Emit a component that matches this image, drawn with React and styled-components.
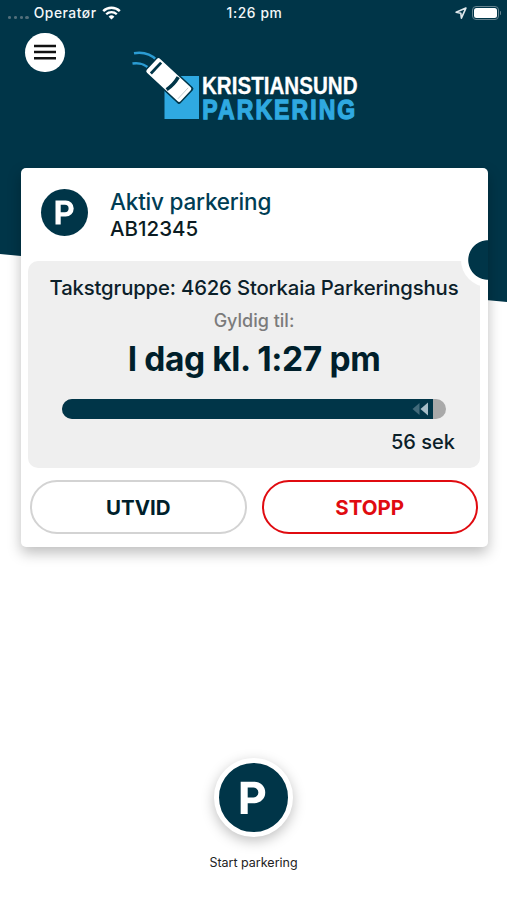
import React from "react";
import styled, { createGlobalStyle } from "styled-components";

const App = () => {
  return (
    <>
      <GlobalStyle />
      <Page>
        <StatusBar>
          <Carrier>
            <Dots>
              <Dot />
              <Dot />
              <Dot />
              <Dot />
            </Dots>
            <CarrierName>Operatør</CarrierName>
            <WifiIcon />
          </Carrier>
          <Clock>1:26 pm</Clock>
          <StatusIcons>
            <LocationIcon />
            <Battery>
              <BatteryLevel />
            </Battery>
            <BatteryTip />
          </StatusIcons>
        </StatusBar>
        <Header>
          <MenuButton aria-label="Meny">
            <MenuIcon />
          </MenuButton>
          <Logo />
        </Header>
        <Card>
          <CardTop>
            <Badge>
              <ParkingP width={20} />
            </Badge>
            <div>
              <Title>Aktiv parkering</Title>
              <Plate>AB12345</Plate>
            </div>
          </CardTop>
          <Panel>
            <Zone>Takstgruppe: 4626 Storkaia Parkeringshus</Zone>
            <Muted>Gyldig til:</Muted>
            <ValidTo>I dag kl. 1:27 pm</ValidTo>
            <Track>
              <Fill>
                <Arrows />
              </Fill>
            </Track>
            <Remaining>56 sek</Remaining>
          </Panel>
          <Actions>
            <Button>UTVID</Button>
            <Button $danger>STOPP</Button>
          </Actions>
          <Notch />
        </Card>
        <Start>
          <StartButton aria-label="Start parkering">
            <ParkingP width={27} />
          </StartButton>
          <StartLabel>Start parkering</StartLabel>
        </Start>
      </Page>
    </>
  );
};

const WifiIcon = () => (
  <svg width="19" height="14" viewBox="0 0 19 14" fill="none">
    <path d="M1.2 5.1a12 12 0 0 1 16.6 0" stroke="#fff" strokeWidth="2.5" />
    <path d="M4.2 8.3a7.6 7.6 0 0 1 10.6 0" stroke="#fff" strokeWidth="2.3" />
    <path d="M9.5 13.6 6.6 10.7a4.2 4.2 0 0 1 5.8 0Z" fill="#fff" />
  </svg>
);

const LocationIcon = () => (
  <svg width="12" height="12" viewBox="0 0 12 12" fill="none">
    <path
      d="M10.9 1.1 1.1 5.3l4.7.9.6 4.9Z"
      stroke="#dfe8ec"
      strokeWidth="1.6"
      strokeLinejoin="round"
    />
  </svg>
);

const MenuIcon = () => (
  <svg width="22" height="16" viewBox="0 0 22 16">
    <path d="M0 1.9h22M0 8.1h22M0 14.300h22" stroke="#111" strokeWidth="2.500" />
  </svg>
);

const ParkingP = ({ width }) => (
  <svg width={width} viewBox="0 0 20 25">
    <path
      d="M0.5 0.5h10.2a8 8 0 0 1 0 16H5.7v8H0.5ZM5.7 4.8v7.4h4.2a3.7 3.7 0 0 0 0-7.4Z"
      fill="#fff"
      fillRule="evenodd"
    />
  </svg>
);

const Arrows = () => (
  <svg width="18" height="14" viewBox="0 0 18 14">
    <path d="M7.5 1v12L0.5 7Z" fill="#426a7a" />
    <path d="M16 0.5v13L8.5 7Z" fill="#a5bdc8" />
  </svg>
);

const Logo = () => (
  <LogoSvg width="240" height="80" viewBox="0 0 240 80">
    <rect x="31.5" y="25" width="34.5" height="43" fill="#2fa9e1" />
    <path
      d="M1 2.3c9-1.500 16 0 23 7M-0.500 12.500c7-1 12 0 17.500 6"
      stroke="#2b9cd3"
      strokeWidth="2.500"
      fill="none"
    />
    <g transform="translate(35.800 29) rotate(43)">
      <rect x="-24.500" y="-11" width="49" height="22" rx="2" fill="#003548" />
      <rect x="-23" y="-9.500" width="46" height="19" rx="2" fill="#fff" />
      <path d="M-17.500-7.500v15" stroke="#003548" strokeWidth="2.800" fill="none" />
      <path d="M5-8.500q2 8.500 0 17" stroke="#003548" strokeWidth="3.600" fill="none" />
      <path d="M19.500-7.500v15" stroke="#b5c2c8" strokeWidth="0.800" fill="none" />
    </g>
    <LogoText
      x="69"
      y="43"
      fontSize="24.500"
      fill="#fff"
      stroke="#fff"
      strokeWidth="0.300"
      textLength="155.500"
    >
      KRISTIANSUND
    </LogoText>
    <LogoText
      x="69.300"
      y="67.500"
      fontSize="27.500"
      letterSpacing="2.500"
      fill="#2fa9e1"
      stroke="#2fa9e1"
      strokeWidth="1.300"
      textLength="155"
    >
      PARKERING
    </LogoText>
  </LogoSvg>
);

const GlobalStyle = createGlobalStyle`
  * {
    box-sizing: border-box;
  }
  body {
    margin: 0;
    background: #fff;
    font-family: Inter, "Liberation Sans", sans-serif;
  }
`;

const Page = styled.div`
  position: relative;
  display: flex;
  flex-direction: column;
  width: 507px;
  height: 900px;
  overflow: hidden;
  isolation: isolate;
  &::before {
    content: "";
    position: absolute;
    inset: 0 0 auto;
    height: 302px;
    z-index: -1;
    background: #003548;
    clip-path: polygon(0 0, 100% 0, 100% 100%, 0 254px);
  }
`;

const StatusBar = styled.div`
  display: grid;
  grid-template-columns: 1fr auto 1fr;
  align-items: center;
  height: 26px;
  padding: 0 6px 0 8px;
  color: #f4f8f9;
  font-size: 13.8px;
  font-weight: 500;
  line-height: 16px;
`;

const Carrier = styled.div`
  display: flex;
  align-items: center;
`;

const Dots = styled.div`
  display: flex;
  gap: 2.5px;
  margin: 8px 5px 0 0;
`;

const Dot = styled.span`
  width: 3.3px;
  height: 3px;
  border-radius: 50%;
  background: #526f7b;
`;

const CarrierName = styled.span`
  margin-right: 5px;
  letter-spacing: 0.55px;
`;

const Clock = styled.div`
  letter-spacing: 0.6px;
`;

const StatusIcons = styled.div`
  display: flex;
  align-items: center;
  justify-content: flex-end;
`;

const Battery = styled.div`
  width: 27px;
  height: 14px;
  margin-left: 5px;
  padding: 1px;
  border: 1px solid #66838f;
  border-radius: 4px;
`;

const BatteryLevel = styled.div`
  height: 100%;
  border-radius: 2.5px;
  background: #fff;
`;

const BatteryTip = styled.div`
  width: 1.5px;
  height: 4px;
  margin-left: 1px;
  border-radius: 0 2px 2px 0;
  background: #66838f;
`;

const Header = styled.header`
  display: flex;
  align-items: flex-start;
  height: 142px;
  padding: 6.5px 0 0 25px;
`;

const MenuButton = styled.button`
  display: flex;
  align-items: center;
  justify-content: center;
  width: 39.5px;
  height: 39.5px;
  padding: 0;
  border: 0;
  border-radius: 50%;
  background: #fff;
`;

const LogoSvg = styled.svg`
  margin: 18px 0 0 68px;
  overflow: visible;
`;

const LogoText = styled.text.attrs({ lengthAdjust: "spacingAndGlyphs" })`
  font-family: "Liberation Sans", Arial, sans-serif;
  font-weight: 700;
`;

const Card = styled.section`
  position: relative;
  flex: none;
  width: 467px;
  height: 378.5px;
  margin-left: 20.5px;
  padding: 0 7.5px;
  border-radius: 5px;
  background: #fff;
  box-shadow: 0 6px 14px rgba(0, 0, 0, 0.26);
`;

const CardTop = styled.div`
  display: flex;
  align-items: flex-start;
  gap: 22px;
  height: 92.5px;
  padding: 21px 0 0 13px;
`;

const Badge = styled.div`
  display: flex;
  align-items: center;
  justify-content: center;
  width: 47px;
  height: 47px;
  border-radius: 50%;
  background: #003548;
`;

const Title = styled.div`
  color: #003d54;
  font-size: 22.5px;
  font-weight: 450;
  letter-spacing: -0.2px;
  line-height: 26px;
`;

const Plate = styled.div`
  color: #0b1b22;
  font-size: 20.5px;
  font-weight: 450;
  line-height: 27px;
`;

const Panel = styled.div`
  display: flex;
  flex-direction: column;
  align-items: center;
  height: 207.5px;
  padding-top: 13px;
  border-radius: 10px;
  background: #efefef;
  color: #0b2029;
`;

const Zone = styled.div`
  font-size: 20.3px;
  font-weight: 450;
  letter-spacing: -0.15px;
  line-height: 28px;
  white-space: nowrap;
`;

const Muted = styled.div`
  margin-top: 7px;
  color: #7b7b7b;
  font-size: 18px;
  font-weight: 450;
  line-height: 24px;
`;

const ValidTo = styled.div`
  margin-top: 6.5px;
  color: #001f2b;
  font-size: 33.5px;
  font-weight: 700;
  letter-spacing: -0.4px;
  line-height: 40px;
`;

const Track = styled.div`
  width: 384px;
  height: 20px;
  margin-top: 20px;
  border-radius: 10px;
  overflow: hidden;
  background: #a9a9a9;
`;

const Fill = styled.div`
  display: flex;
  align-items: center;
  justify-content: flex-end;
  width: 371px;
  height: 100%;
  padding-right: 3px;
  background: #003548;
`;

const Remaining = styled.div`
  align-self: flex-end;
  margin: 10.5px 25px 0 0;
  font-size: 20px;
  font-weight: 450;
  line-height: 24px;
`;

const Actions = styled.div`
  display: flex;
  gap: 15px;
  padding: 12px 2px 0;
`;

const Button = styled.button`
  flex: 1;
  height: 54px;
  padding: 1px 0 0;
  border: 2px solid ${({ $danger }) => ($danger ? "#e00b10" : "#d3d3d3")};
  border-radius: 27px;
  background: #fff;
  color: ${({ $danger }) => ($danger ? "#e00b10" : "#001f2b")};
  font-family: inherit;
  font-size: 20.5px;
  font-weight: 700;
`;

/* ticket-style cut-out on the right edge */
const Notch = styled.div`
  position: absolute;
  top: 65px;
  right: 0;
  width: 27px;
  height: 54px;
  border-radius: 27px 0 0 27px;
  background: radial-gradient(
    circle at 100% 50%,
    #003548 19.3px,
    #fff 20.2px
  );
`;

const Start = styled.div`
  display: flex;
  flex-direction: column;
  align-items: center;
  margin-top: auto;
  padding-bottom: 27px;
`;

const StartButton = styled.button`
  display: flex;
  align-items: center;
  justify-content: center;
  width: 79px;
  height: 79px;
  padding: 0;
  border: 5px solid #fff;
  border-radius: 50%;
  background: #003548;
  box-shadow: 0 4px 13px rgba(0, 0, 0, 0.25);
`;

const StartLabel = styled.div`
  margin-top: 16px;
  color: #222;
  font-size: 12.5px;
  line-height: 20px;
`;

export default App;
